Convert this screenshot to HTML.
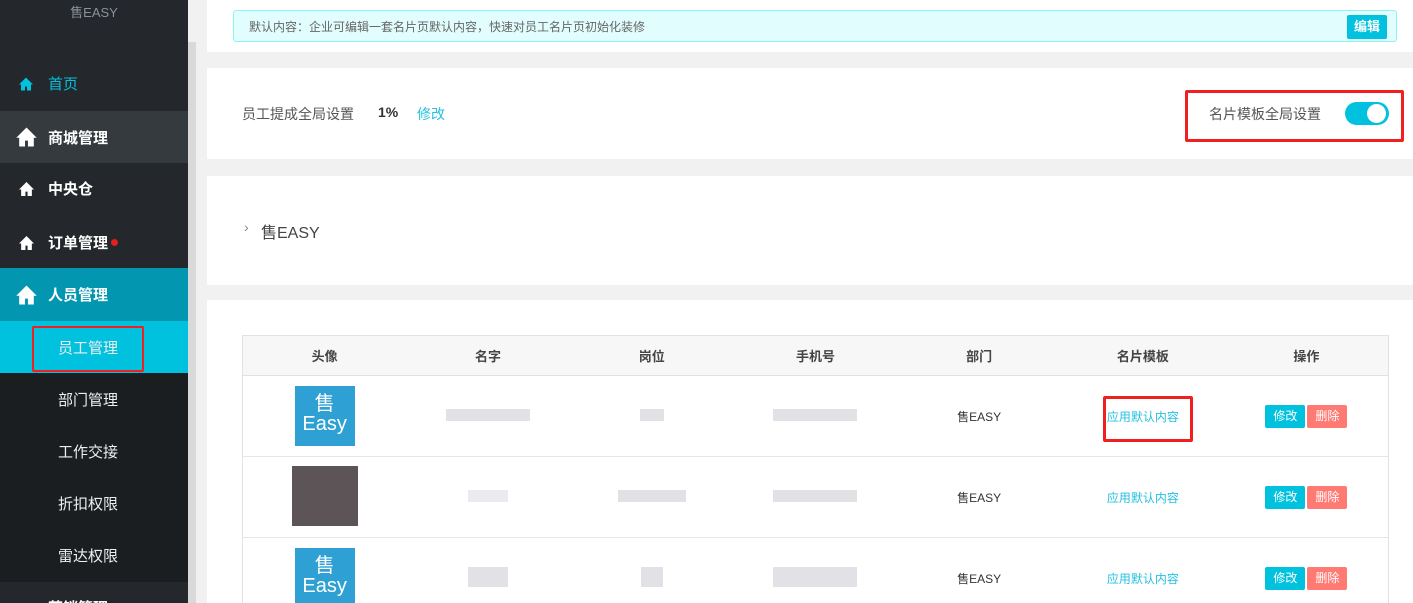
<!DOCTYPE html>
<html style="height:603px;overflow:hidden"><head><meta charset="utf-8"><style>
*{margin:0;padding:0;box-sizing:border-box}
body{width:1413px;height:603px;overflow:hidden;background:#f1f1f1;font-family:"Liberation Sans","Noto Sans CJK SC",sans-serif;position:relative}
.sb{position:absolute;left:0;top:0;width:188px;height:603px;background:#24282c;overflow:hidden}
.scr{position:absolute;left:188px;top:42px;width:8px;height:561px;background:#d9d9d9}
.logo{position:absolute;left:0;width:188px;top:2px;text-align:center;color:#8a9199;font-size:13px}
.it{position:absolute;left:0;width:188px;height:53px;color:#fff;font-size:15px;display:flex;align-items:center;padding-left:48px;font-weight:bold}
.ic{position:absolute;left:19px;top:50%;transform:translateY(-50%)}
.sub{justify-content:flex-start;padding-left:58px;background:#1b1e21;font-size:15px;color:#eee;font-weight:normal}
.card{position:absolute;left:207px;right:0;background:#fff}
.t{position:absolute;font-size:14px;color:#555}
.tw{position:absolute;left:242px;top:335px;width:1147px;height:268px;overflow:hidden}
table{width:1147px;border-collapse:collapse;border:1px solid #e2e2e2;table-layout:fixed}
th{height:40px;background:#f7f7f7;font-size:13px;color:#444;font-weight:bold;border-bottom:1px solid #e2e2e2}
td{height:81px;text-align:center;font-size:12px;color:#333;border-bottom:1px solid #e6e6e6}
.av{display:inline-block;width:60px;height:60px;background:#2fa0d4;color:#fff;line-height:20px;padding-top:8px;font-size:20px}
.blur{display:inline-block;height:12px;background:#e2e2e6}
.lk{color:#26c0e0}
.b{display:inline-block;width:40px;height:23px;line-height:23px;color:#fff;border-radius:2px;font-size:12px;margin:0 1px}
</style></head><body>
<div class="sb">
<div class="logo">售EASY</div>
<div class="it" style="top:57px;color:#00c1de;font-weight:normal"><svg class="ic" width="14" height="13" viewBox="0 0 14 13"><path d="M7 0L0 7h2v6h4V9h2v4h4V7h2z" fill="#00c1de"/></svg>首页</div>
<div class="it" style="top:111px;background:#353a3e;height:52px"><svg class="ic" style="left:16px" width="21" height="19" viewBox="0 0 14 13"><path d="M7 0L0 7h2v6h4V9h2v4h4V7h2z" fill="#fff"/></svg>商城管理</div>
<div class="it" style="top:162px"><svg class="ic" width="15" height="14" viewBox="0 0 14 13"><path d="M7 0L0 7h2v6h4V9h2v4h4V7h2z" fill="#fff"/></svg>中央仓</div>
<div class="it" style="top:216px"><svg class="ic" width="15" height="14" viewBox="0 0 14 13"><path d="M7 0L0 7h2v6h4V9h2v4h4V7h2z" fill="#fff"/></svg>订单管理<span style="display:inline-block;width:7px;height:7px;border-radius:50%;background:#e0201a;margin-left:3px"></span></div>
<div class="it" style="top:268px;background:#0396b0"><svg class="ic" style="left:16px" width="21" height="19" viewBox="0 0 14 13"><path d="M7 0L0 7h2v6h4V9h2v4h4V7h2z" fill="#fff"/></svg>人员管理</div>
<div class="it sub" style="top:321px;height:52px;background:#00c1de"><div style="position:absolute;left:32px;top:5px;width:112px;height:46px;border:2px solid #f02020;border-radius:2px"></div>员工管理</div>
<div class="it sub" style="top:373px">部门管理</div>
<div class="it sub" style="top:425px">工作交接</div>
<div class="it sub" style="top:477px">折扣权限</div>
<div class="it sub" style="top:529px">雷达权限</div>
<div class="it" style="top:583px;height:30px;background:#24282c;align-items:flex-start;padding-top:14px">营销管理</div>
</div>
<div class="scr"></div>

<div class="card" style="top:0;height:52px">
<div style="position:absolute;left:26px;top:10px;width:1164px;height:32px;background:#e1fdfd;border:1px solid #8ef3f6;border-radius:3px">
<span style="position:absolute;left:15px;top:7px;font-size:12px;color:#666">默认内容：企业可编辑一套名片页默认内容，快速对员工名片页初始化装修</span>
<span style="position:absolute;right:9px;top:4px;width:40px;height:24px;background:#00c1de;border-radius:2px;color:#fff;font-size:13px;font-weight:bold;text-align:center;line-height:24px">编辑</span></div></div>

<div class="card" style="top:68px;height:91px">
<span class="t" style="left:35px;top:36px">员工提成全局设置</span>
<span class="t" style="left:171px;top:36px;font-weight:bold;color:#333">1%</span>
<span class="t" style="left:210px;top:36px;color:#26c0e0">修改</span>
<div style="position:absolute;left:978px;top:22px;width:219px;height:52px;border:3px solid #f02020;border-radius:2px"></div>
<span class="t" style="left:1002px;top:36px">名片模板全局设置</span>
<div style="position:absolute;left:1138px;top:34px;width:44px;height:23px;border-radius:12px;background:#00c1de"><div style="position:absolute;right:3px;top:2px;width:19px;height:19px;border-radius:50%;background:#fff"></div></div>
</div>

<div class="card" style="top:176px;height:109px">
<span class="t" style="left:37px;top:43px;color:#888">›</span>
<span class="t" style="left:54px;top:43px;font-size:16px;color:#444">售EASY</span>
</div>

<div class="card" style="top:300px;height:303px"></div>
<div class="tw"><table>
<tr><th>头像</th><th>名字</th><th>岗位</th><th>手机号</th><th>部门</th><th>名片模板</th><th>操作</th></tr>
<tr><td><span class="av">售<br>Easy</span></td><td><span class="blur" style="width:84px"></span></td><td><span class="blur" style="width:24px"></span></td><td><span class="blur" style="width:84px"></span></td><td>售EASY</td><td style="position:relative"><span class="lk">应用默认内容</span><div style="position:absolute;left:42px;top:20px;width:90px;height:46px;border:3px solid #f02020;border-radius:2px"></div></td><td><span class="b" style="background:#00c1de">修改</span><span class="b" style="background:#ff7a73">删除</span></td></tr>
<tr><td><span class="av" style="background:#5c5457;width:66px"></span></td><td><span class="blur" style="width:40px;background:#ebebef"></span></td><td><span class="blur" style="width:68px"></span></td><td><span class="blur" style="width:84px"></span></td><td>售EASY</td><td><span class="lk">应用默认内容</span></td><td><span class="b" style="background:#00c1de">修改</span><span class="b" style="background:#ff7a73">删除</span></td></tr>
<tr><td><span class="av">售<br>Easy</span></td><td><span class="blur" style="width:40px;height:20px"></span></td><td><span class="blur" style="width:22px;height:20px"></span></td><td><span class="blur" style="width:84px;height:20px"></span></td><td>售EASY</td><td><span class="lk">应用默认内容</span></td><td><span class="b" style="background:#00c1de">修改</span><span class="b" style="background:#ff7a73">删除</span></td></tr>
</table></div>
</body></html>
